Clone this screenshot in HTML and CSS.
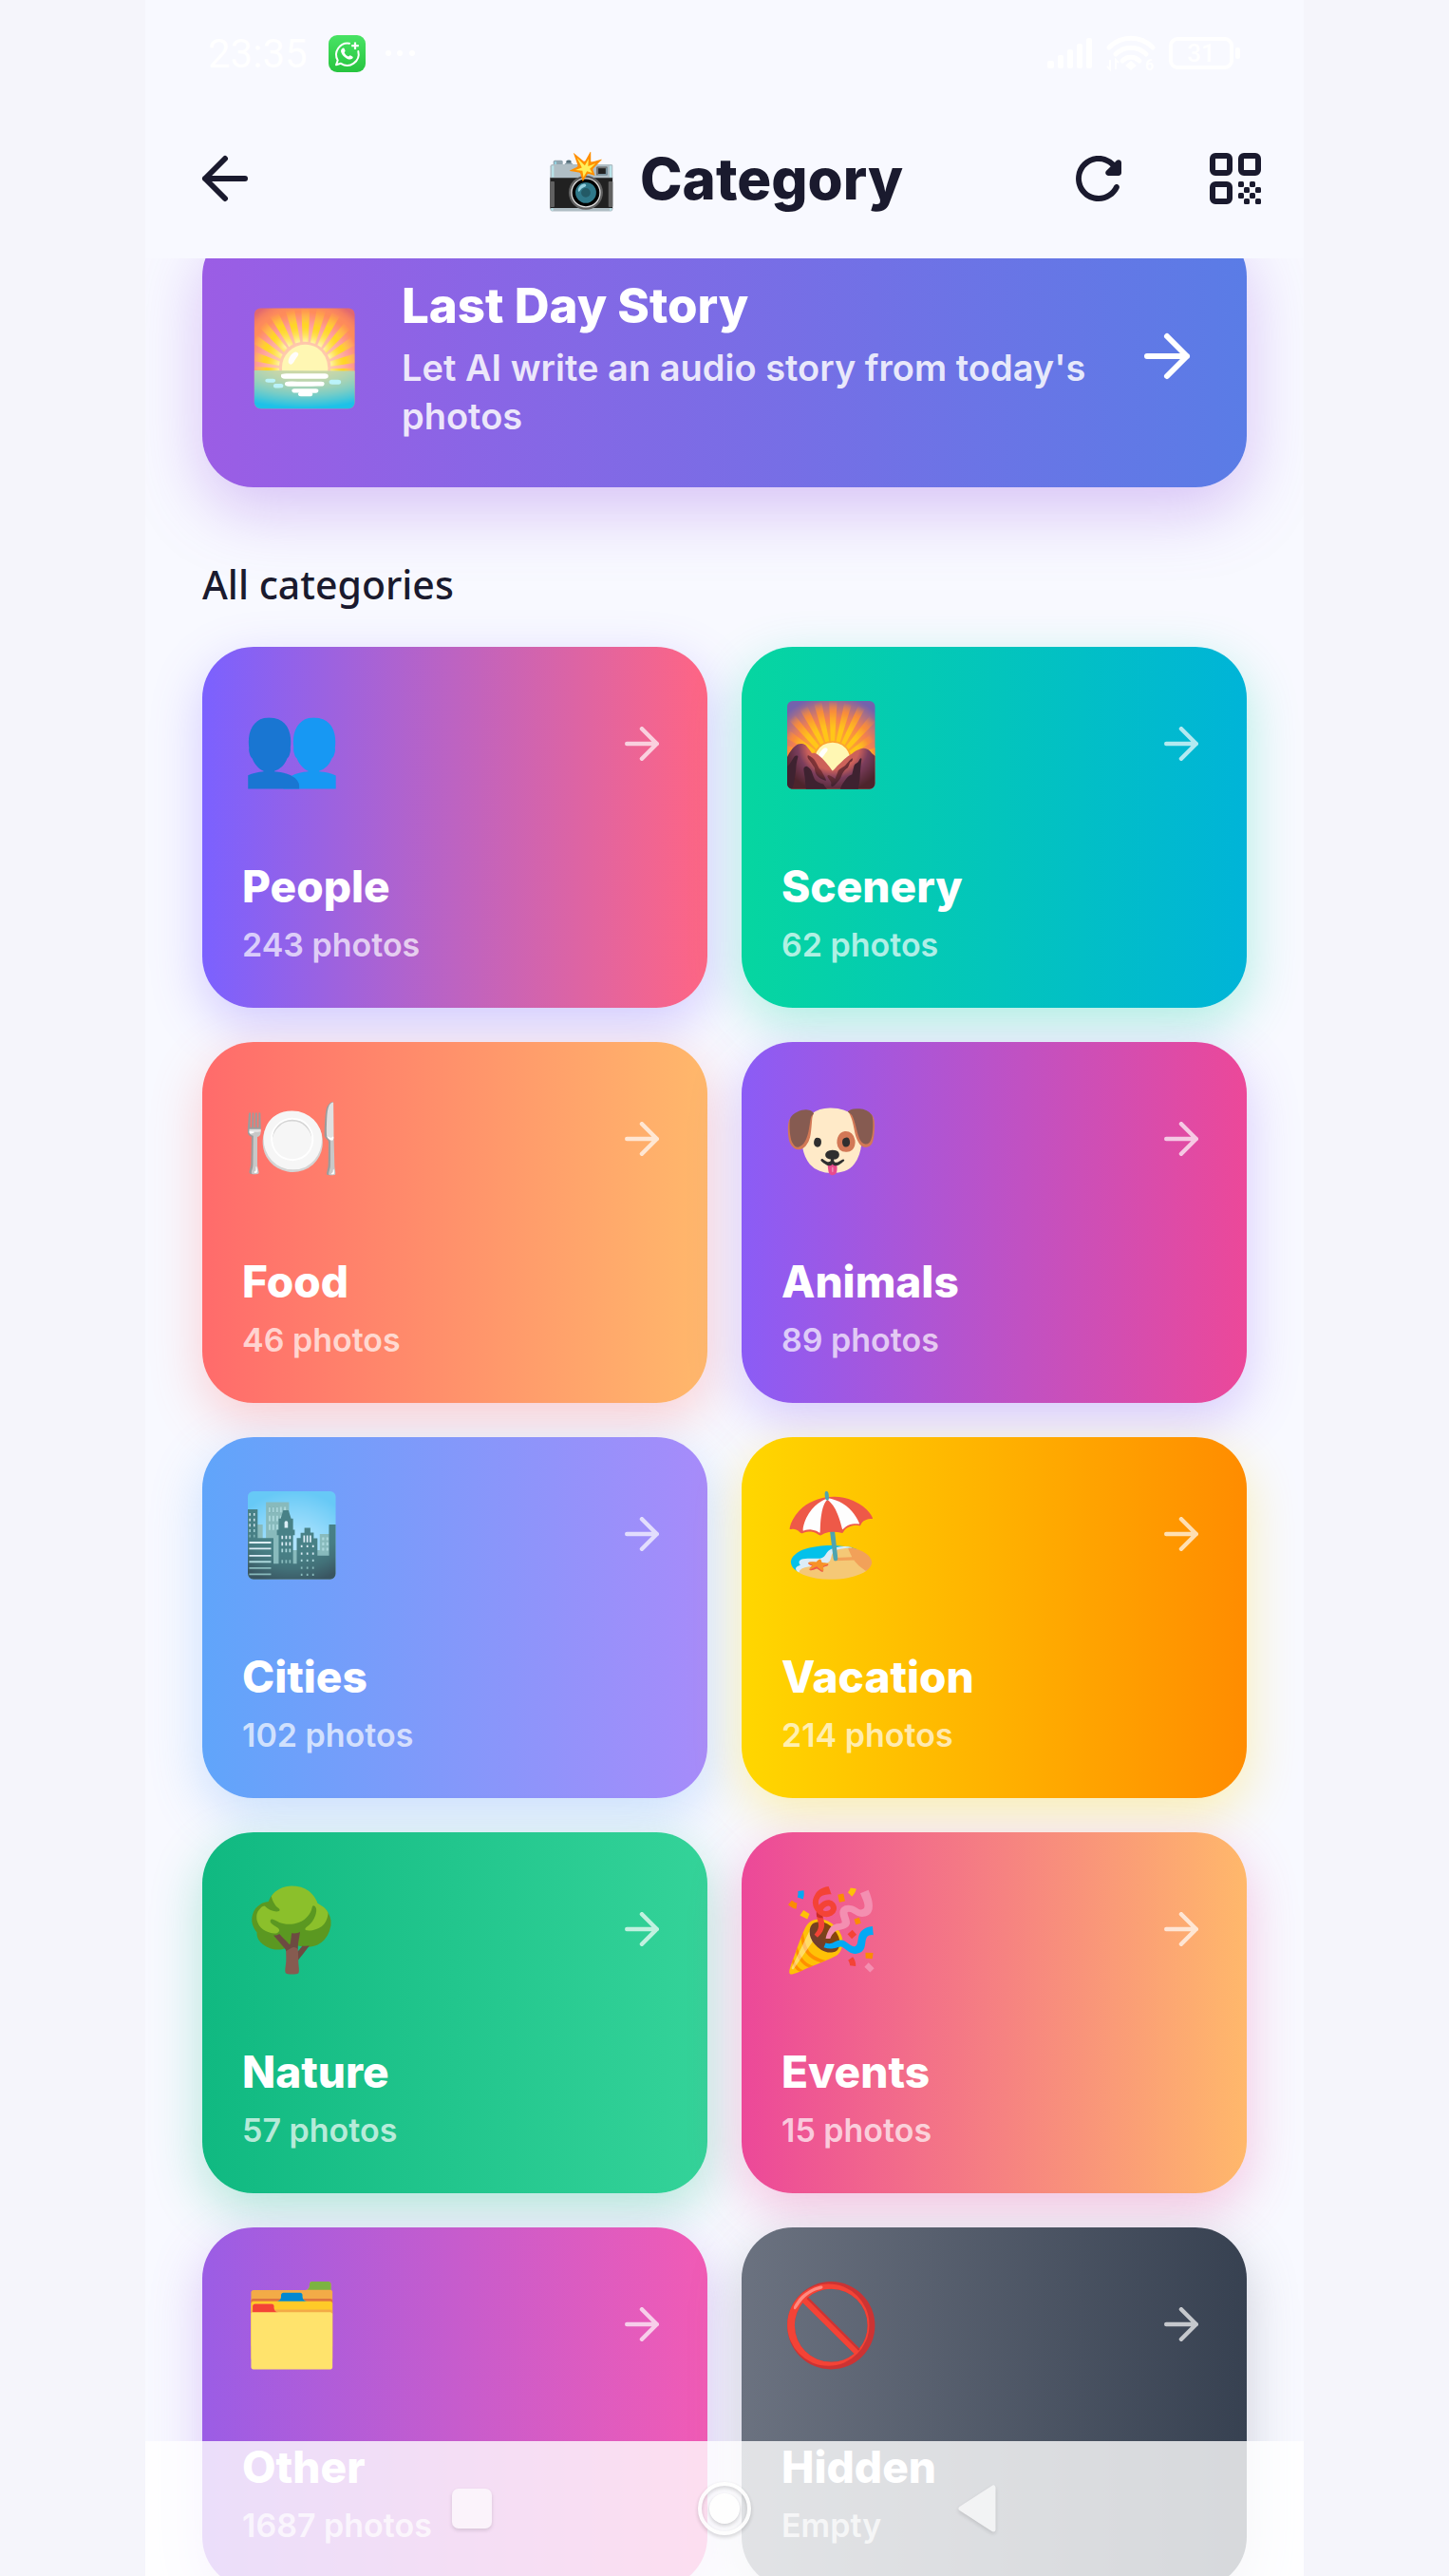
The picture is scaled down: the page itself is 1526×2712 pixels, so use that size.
FILE: index.html
```html
<!DOCTYPE html>
<html lang="en">
<head>
  <meta charset="UTF-8" />
  <meta name="viewport" content="width=device-width, initial-scale=1.0"/>
  <title>Category</title>
  <link rel="stylesheet" href="styles.css">
</head>
<body>
  <svg class="sprite" aria-hidden="true">
    <symbol id="arrow" viewBox="0 0 24 24">
      <path d="M5 12h14M12 5l7 7-7 7" fill="none" stroke="currentColor" stroke-width="2" stroke-linecap="round" stroke-linejoin="round"/>
    </symbol>
  </svg>

  <div class="phone">
    <header>
      <!-- Status bar -->
      <div class="status-bar">
        <span class="clock">23:35</span>
        <svg class="app-badge" width="39" height="39" viewBox="0 0 39 39">
          <defs>
            <linearGradient id="wa" x1="0" y1="0" x2="0" y2="1">
              <stop offset="0" stop-color="#48e364"/>
              <stop offset="1" stop-color="#27c43f"/>
            </linearGradient>
          </defs>
          <rect width="39" height="39" rx="9" fill="url(#wa)"/>
          <path d="M22 8.7a12 12 0 0 0-12.3 17.8L8 31.3l5-1.5A12 12 0 0 0 31.3 17" fill="none" stroke="#fff" stroke-width="2" stroke-linecap="round" stroke-linejoin="round"/>
          <path d="M28 7.5v7.5M24.2 11.2h7.6" stroke="#fff" stroke-width="2.2"/>
          <path d="M14.2 14.2c1.3-1.2 2.2-.8 2.7.5l.7 1.8c.2.7-1.1 1.5-.9 2 .9 1.9 2.3 3.2 4.2 4 .6.2 1.3-1.4 2-1.2l2.2 1.1c1 .5.7 1.7-.2 2.4-1.3 1-3.2 1-5.6-.1-3-1.5-5.2-3.9-6-6.6-.5-1.8-.1-3 .9-3.9z" fill="#fff"/>
        </svg>
        <svg width="32" height="8" viewBox="0 0 32 8" fill="#fff">
          <circle cx="4" cy="4" r="3"/><circle cx="16" cy="4" r="3"/><circle cx="29" cy="4" r="3"/>
        </svg>
        <div class="status-icons">
          <svg width="48" height="32" viewBox="0 0 48 32" fill="#fff">
            <rect x="0" y="24" width="7" height="8" rx="2"/>
            <rect x="11" y="18" width="6" height="14" rx="2"/>
            <rect x="21" y="12" width="6" height="20" rx="2"/>
            <rect x="31" y="6" width="6" height="26" rx="2"/>
            <rect x="41" y="0" width="6" height="32" rx="2"/>
          </svg>
          <svg width="52" height="42" viewBox="0 0 52 42">
            <g fill="none" stroke="#fff" stroke-width="5" stroke-linecap="round">
              <path d="M3 15C16 2 36 2 49 15"/>
              <path d="M10 22c9-9 23-9 32 0"/>
              <path d="M17 29c5-5 13-5 18 0"/>
            </g>
            <path d="M26 29l6 5-6 5-6-5z" fill="#fff"/>
            <path d="M4 28v10l-3-3M10 38V28l3 3" fill="none" stroke="#fff" stroke-width="2"/>
            <text x="41" y="39" class="wifi-gen">6</text>
          </svg>
          <svg width="76" height="34" viewBox="0 0 76 34">
            <rect x="2" y="2" width="64" height="30" rx="7" fill="none" stroke="#fff" stroke-width="4"/>
            <rect x="70" y="11" width="5" height="12" rx="2" fill="#fff"/>
            <text x="34" y="26" text-anchor="middle" class="battery-level">31</text>
          </svg>
        </div>
      </div>

      <!-- App bar -->
      <div class="app-bar">
        <button class="icon-button back" type="button" aria-label="Back">
          <svg class="flip" width="72" height="72"><use href="#arrow"/></svg>
        </button>
        <h1><span class="camera">📸</span><span>Category</span></h1>
        <div class="actions">
          <button class="icon-button" type="button" aria-label="Refresh">
            <svg width="72" height="72" viewBox="0 0 24 24" fill="currentColor">
              <path d="M17.65 6.35c-1.63-1.63-3.94-2.57-6.48-2.31-3.67.37-6.69 3.35-7.1 7.02C3.52 15.91 7.27 20 12 20c3.19 0 5.93-1.87 7.21-4.56.32-.67-.16-1.44-.9-1.44-.37 0-.72.2-.88.53-1.13 2.43-3.84 3.97-6.8 3.31-2.22-.49-4.01-2.3-4.48-4.52C5.31 9.44 8.26 6 12 6c1.66 0 3.14.69 4.22 1.78l-1.51 1.51c-.63.63-.19 1.71.7 1.71H19c.55 0 1-.45 1-1V6.41c0-.89-1.08-1.34-1.71-.71l-.64.65z"/>
            </svg>
          </button>
          <button class="icon-button" type="button" aria-label="QR code">
            <svg width="72" height="72" viewBox="0 0 24 24" fill="currentColor">
              <g fill="none" stroke="currentColor" stroke-width="2">
                <rect x="4" y="4" width="6" height="6" rx="1"/>
                <rect x="14" y="4" width="6" height="6" rx="1"/>
                <rect x="4" y="14" width="6" height="6" rx="1"/>
              </g>
              <rect x="13" y="13" width="2" height="2" rx=".5"/><rect x="17" y="13" width="2" height="2" rx=".5"/>
              <rect x="15" y="15" width="2" height="2" rx=".5"/><rect x="19" y="15" width="2" height="2" rx=".5"/>
              <rect x="13" y="17" width="2" height="2" rx=".5"/><rect x="17" y="17" width="2" height="2" rx=".5"/>
              <rect x="15" y="19" width="2" height="2" rx=".5"/><rect x="19" y="19" width="2" height="2" rx=".5"/>
            </svg>
          </button>
        </div>
      </div>
    </header>

    <main>
      <a href="#story" class="story">
        <span class="story-emoji">🌅</span>
        <div class="story-text">
          <h2>Last Day Story</h2>
          <p>Let AI write an audio story from today's photos</p>
        </div>
        <svg width="72" height="72"><use href="#arrow"/></svg>
      </a>

      <h3 class="section-title">All categories</h3>

      <div class="categories">
        <a href="#people" class="card people">
          <div class="card-top"><span class="emoji">👥</span><svg class="go" width="54" height="54"><use href="#arrow"/></svg></div>
          <div><h4>People</h4><p>243 photos</p></div>
        </a>
        <a href="#scenery" class="card scenery">
          <div class="card-top"><span class="emoji">🌄</span><svg class="go" width="54" height="54"><use href="#arrow"/></svg></div>
          <div><h4>Scenery</h4><p>62 photos</p></div>
        </a>
        <a href="#food" class="card food">
          <div class="card-top"><span class="emoji">🍽️</span><svg class="go" width="54" height="54"><use href="#arrow"/></svg></div>
          <div><h4>Food</h4><p>46 photos</p></div>
        </a>
        <a href="#animals" class="card animals">
          <div class="card-top"><span class="emoji">🐶</span><svg class="go" width="54" height="54"><use href="#arrow"/></svg></div>
          <div><h4>Animals</h4><p>89 photos</p></div>
        </a>
        <a href="#cities" class="card cities">
          <div class="card-top"><span class="emoji">🏙️</span><svg class="go" width="54" height="54"><use href="#arrow"/></svg></div>
          <div><h4>Cities</h4><p>102 photos</p></div>
        </a>
        <a href="#vacation" class="card vacation">
          <div class="card-top"><span class="emoji">🏖️</span><svg class="go" width="54" height="54"><use href="#arrow"/></svg></div>
          <div><h4>Vacation</h4><p>214 photos</p></div>
        </a>
        <a href="#nature" class="card nature">
          <div class="card-top"><span class="emoji">🌳</span><svg class="go" width="54" height="54"><use href="#arrow"/></svg></div>
          <div><h4>Nature</h4><p>57 photos</p></div>
        </a>
        <a href="#events" class="card events">
          <div class="card-top"><span class="emoji">🎉</span><svg class="go" width="54" height="54"><use href="#arrow"/></svg></div>
          <div><h4>Events</h4><p>15 photos</p></div>
        </a>
        <a href="#other" class="card other">
          <div class="card-top"><span class="emoji">🗂️</span><svg class="go" width="54" height="54"><use href="#arrow"/></svg></div>
          <div><h4>Other</h4><p>1687 photos</p></div>
        </a>
        <a href="#hidden" class="card hidden-photos">
          <div class="card-top"><span class="emoji">🚫</span><svg class="go" width="54" height="54"><use href="#arrow"/></svg></div>
          <div><h4>Hidden</h4><p>Empty</p></div>
        </a>
      </div>
    </main>

    <!-- System navigation, lies over the list -->
    <nav class="system-nav">
      <button type="button" aria-label="Recent apps">
        <svg width="60" height="60" viewBox="0 0 60 60"><rect x="9" y="9" width="42" height="42" rx="7" fill="#fff"/></svg>
      </button>
      <button type="button" aria-label="Home" class="home">
        <svg width="60" height="60" viewBox="0 0 60 60">
          <circle cx="30" cy="30" r="26" fill="none" stroke="#fff" stroke-width="4"/>
          <circle cx="30" cy="30" r="16" fill="#fff"/>
        </svg>
      </button>
      <button type="button" aria-label="Back">
        <svg width="60" height="60" viewBox="0 0 60 60"><path d="M13 30L47 8v44z" fill="#fff" stroke="#fff" stroke-width="5" stroke-linejoin="round"/></svg>
      </button>
    </nav>
  </div>
</body>
</html>
```
FILE: styles.css
```css
* {
  box-sizing: border-box;
}

body {
  margin: 0;
  background: #f5f5fb;
  color: #1a1a2e;
  font-family: Inter, 'Liberation Sans', sans-serif;
}

h1, h2, h3, h4, p {
  margin: 0;
}

a {
  color: #fff;
  text-decoration: none;
}

svg {
  display: block;
  flex-shrink: 0;
}

button {
  padding: 0;
  border: none;
  background: none;
  color: inherit;
  cursor: pointer;
}

.sprite {
  position: absolute;
  width: 0;
  height: 0;
}

.phone {
  position: relative;
  display: flex;
  flex-direction: column;
  max-width: 1220px;
  height: 100vh;
  margin: 0 auto;
  background: #f8f9ff;
  overflow: hidden;
}

/* Header */
.status-bar {
  display: flex;
  align-items: center;
  height: 112px;
  padding: 0 66px;
  color: #fff;
}

.clock {
  font-family: Roboto, sans-serif;
  font-size: 42px;
}

.app-badge {
  margin: 0 20px 0 22px;
}

.status-icons {
  display: flex;
  align-items: center;
  gap: 14px;
  margin-left: auto;
}

.battery-level {
  fill: #fff;
  font: 500 26px Roboto, sans-serif;
}

.wifi-gen {
  fill: #fff;
  font: 700 16px Roboto, sans-serif;
}

.app-bar {
  display: grid;
  grid-template-columns: 1fr auto 1fr;
  align-items: center;
  height: 160px;
  padding-bottom: 8px;
}

h1 {
  display: flex;
  align-items: center;
  gap: 24px;
  font-size: 60px;
  font-weight: 800;
  line-height: 72px;
}

.icon-button {
  display: flex;
  align-items: center;
  justify-content: center;
  width: 144px;
  height: 144px;
}

.back {
  width: 168px;
}

.flip {
  transform: scaleX(-1);
}

.actions {
  display: flex;
  justify-content: flex-end;
}

/* List */
main {
  flex: 1;
  min-height: 0;
  padding: 0 60px;
  overflow: hidden;
}

.story {
  display: flex;
  align-items: center;
  gap: 42px;
  min-height: 276px;
  margin-top: -35px;
  padding: 48px;
  border-radius: 54px;
  background: linear-gradient(to right, #9b5de5, #5a7ce6);
  box-shadow: 0 24px 68px rgba(155, 93, 229, 0.35);
}

.story-emoji {
  font-size: 96px;
  line-height: 120px;
}

.story-text {
  flex: 1;
  padding-top: 4px;
}

.story h2 {
  margin-bottom: 8px;
  font-size: 51px;
  font-weight: 800;
  line-height: 64px;
}

.story p {
  color: rgba(255, 255, 255, 0.85);
  font-size: 38px;
  font-weight: 600;
  line-height: 51px;
}

.story > svg {
  margin-left: -42px;
}

.section-title {
  margin: 74px 0 38px;
  font-family: 'Noto Sans', sans-serif;
  font-size: 41px;
  font-weight: 500;
  line-height: 56px;
}

.categories {
  display: grid;
  grid-template-columns: 1fr 1fr;
  gap: 36px;
}

.card {
  display: flex;
  flex-direction: column;
  justify-content: space-between;
  min-height: 380px;
  padding: 42px;
  border-radius: 54px;
}

.card-top {
  display: flex;
  align-items: center;
  justify-content: space-between;
}

.emoji {
  font-size: 84px;
  line-height: 120px;
}

.go {
  opacity: 0.7;
}

.card h4 {
  margin-bottom: 5px;
  font-size: 46px;
  font-weight: 800;
  line-height: 66px;
}

.card p {
  color: rgba(255, 255, 255, 0.7);
  font-size: 34px;
  font-weight: 600;
  line-height: 48px;
}

.people {
  background: linear-gradient(to right, #7b61ff, #ff6584);
  box-shadow: 0 18px 54px rgba(123, 97, 255, 0.3);
}

.scenery {
  background: linear-gradient(to right, #06d6a0, #00b4d8);
  box-shadow: 0 18px 54px rgba(6, 214, 160, 0.3);
}

.food {
  background: linear-gradient(to right, #ff6b6b, #ffb86b);
  box-shadow: 0 18px 54px rgba(255, 107, 107, 0.3);
}

.animals {
  background: linear-gradient(to right, #8b5cf6, #ec4899);
  box-shadow: 0 18px 54px rgba(139, 92, 246, 0.3);
}

.cities {
  background: linear-gradient(to right, #60a5fa, #a78bfa);
  box-shadow: 0 18px 54px rgba(96, 165, 250, 0.3);
}

.vacation {
  background: linear-gradient(to right, #ffd700, #ff8c00);
  box-shadow: 0 18px 54px rgba(255, 215, 0, 0.3);
}

.nature {
  background: linear-gradient(to right, #10b981, #34d399);
  box-shadow: 0 18px 54px rgba(16, 185, 129, 0.3);
}

.events {
  background: linear-gradient(to right, #ec4899, #ffb86b);
  box-shadow: 0 18px 54px rgba(236, 72, 153, 0.3);
}

.other {
  background: linear-gradient(to right, #9b5de5, #f15bb5);
  box-shadow: 0 18px 54px rgba(155, 93, 229, 0.3);
}

.hidden-photos {
  background: linear-gradient(to right, #6b7280, #374151);
  box-shadow: 0 18px 54px rgba(107, 114, 128, 0.3);
}

/* System navigation */
.system-nav {
  position: absolute;
  right: 0;
  bottom: 0;
  left: 0;
  display: flex;
  justify-content: center;
  height: 142px;
  background: rgba(255, 255, 255, 0.8);
}

.system-nav button {
  display: flex;
  align-items: center;
  justify-content: center;
  width: 266px;
}

.system-nav svg {
  opacity: 0.65;
  filter: drop-shadow(0 2px 2px rgba(0, 0, 0, 0.2));
}

.system-nav .home svg {
  opacity: 0.9;
}
```
